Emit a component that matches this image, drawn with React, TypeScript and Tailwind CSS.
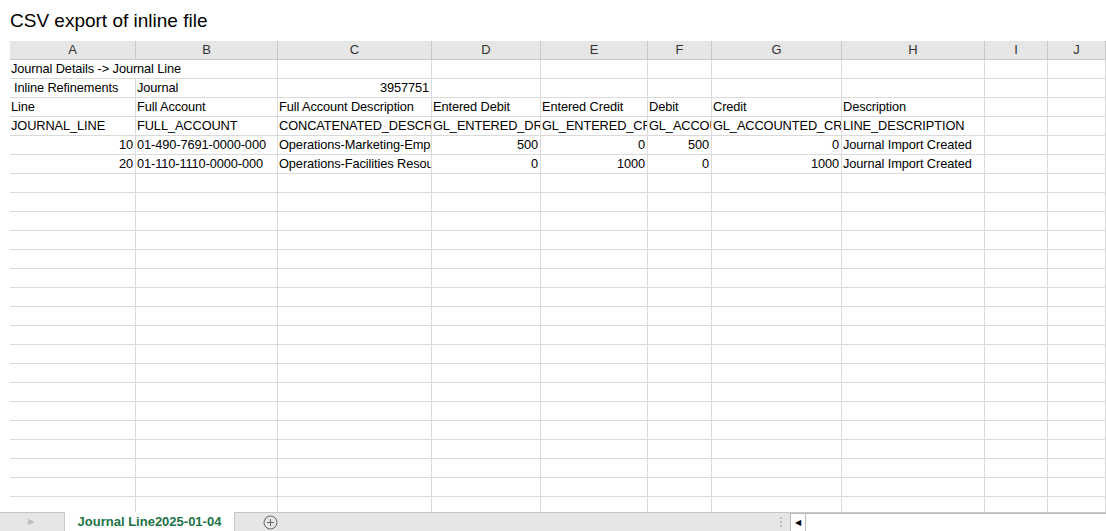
import React from "react";

const cols = "grid-cols-[126px_142px_154px_109px_107px_64px_130px_143px_63px_58px]";
const letters = ["A","B","C","D","E","F","G","H","I","J"];
type C = { t?: string; r?: boolean; span?: boolean; pl?: boolean };
const data: C[][] = [
  [{ t: "Journal Details -> Journal Line", span: true }, {}, {}, {}, {}, {}, {}, {}, {}],
  [{ t: "Inline Refinements", pl: true }, { t: "Journal" }, { t: "3957751", r: true }, {}, {}, {}, {}, {}, {}, {}],
  [{ t: "Line" }, { t: "Full Account" }, { t: "Full Account Description" }, { t: "Entered Debit" }, { t: "Entered Credit" }, { t: "Debit" }, { t: "Credit" }, { t: "Description" }, {}, {}],
  [{ t: "JOURNAL_LINE" }, { t: "FULL_ACCOUNT" }, { t: "CONCATENATED_DESCRIPTION" }, { t: "GL_ENTERED_DR" }, { t: "GL_ENTERED_CR" }, { t: "GL_ACCOUNTED_DR" }, { t: "GL_ACCOUNTED_CR" }, { t: "LINE_DESCRIPTION" }, {}, {}],
  [{ t: "10", r: true }, { t: "01-490-7691-0000-000" }, { t: "Operations-Marketing-Employee" }, { t: "500", r: true }, { t: "0", r: true }, { t: "500", r: true }, { t: "0", r: true }, { t: "Journal Import Created" }, {}, {}],
  [{ t: "20", r: true }, { t: "01-110-1110-0000-000" }, { t: "Operations-Facilities Resources" }, { t: "0", r: true }, { t: "1000", r: true }, { t: "0", r: true }, { t: "1000", r: true }, { t: "Journal Import Created" }, {}, {}],
];
while (data.length < 24) data.push(Array.from({ length: 10 }, () => ({})));

export default function App() {
  return (
    <div className="w-[1106px] h-[531px] bg-white overflow-hidden flex flex-col" style={{ fontFamily: '"Liberation Sans", Arial, sans-serif' }}>
      <div className="h-[41px] pl-[10px] pt-[9px] text-[19px] leading-[24px] text-black">CSV export of inline file</div>
      <div className="flex-1 overflow-hidden ml-[10px]">
        <div className={`grid ${cols} h-[19px] bg-[#e6e6e6]`}>
          {letters.map((l) => (
            <div key={l} className="border-r border-b border-[#c8c8c8] text-center text-[13px] leading-[18px] text-[#333]">{l}</div>
          ))}
        </div>
        {data.map((row, i) => (
          <div key={i} className={`grid ${cols} h-[19px]`}>
            {row.map((c, j) => (
              <div key={j} className={`${c.span ? "col-span-2" : ""} border-r border-b border-[#dadada] overflow-hidden whitespace-nowrap text-[12.8px] tracking-[-0.1px] leading-[18px] text-black ${c.r ? "text-right pr-[2px]" : c.pl ? "pl-[4px]" : "pl-[1px]"}`}>{c.t}</div>
            ))}
          </div>
        ))}
      </div>
      <div className="h-[19px] flex items-stretch bg-[#e6e6e6] border-t border-[#c6c6c6]">
        <div className="w-[54px] ml-[10px] flex items-center pl-[18px] text-[#bbb] text-[8px]">▶</div>
        <div className="w-[171px] bg-white border-x border-[#c6c6c6] -mt-px text-[#217346] font-bold text-[13px] flex items-center justify-center">Journal Line2025-01-04</div>
        <div className="w-[70px] flex items-center justify-center">
          <svg width="15" height="15" viewBox="0 0 15 15"><circle cx="7.5" cy="7.5" r="6.5" fill="none" stroke="#666" /><path d="M7.5 4v7M4 7.5h7" stroke="#666" /></svg>
        </div>
        <div className="flex-1 flex items-center justify-end pr-[8px]">
          <div className="flex flex-col gap-[2px]"><span className="w-[2px] h-[2px] bg-[#bbb]" /><span className="w-[2px] h-[2px] bg-[#bbb]" /><span className="w-[2px] h-[2px] bg-[#bbb]" /></div>
        </div>
        <div className="w-[316px] bg-white border-l border-t border-[#bbb] flex">
          <div className="w-[15px] border-r border-[#bbb] flex items-center justify-center text-[8px] text-black">◀</div>
        </div>
      </div>
    </div>
  );
}
